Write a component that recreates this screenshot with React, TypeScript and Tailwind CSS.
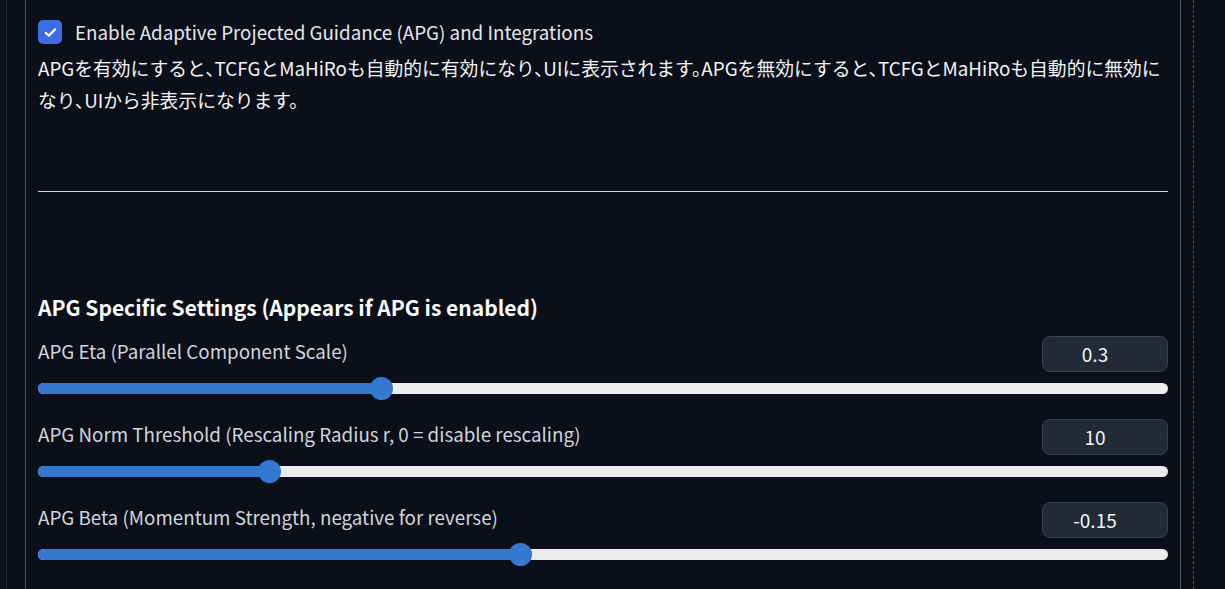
import React from "react";

const FONT = { fontFamily: '"Noto Sans CJK JP", "Noto Sans", sans-serif' };

function Slider({ label, value, pct }: { label: string; value: string; pct: number }) {
  return (
    <div className="flex flex-col">
      <div className="flex items-center justify-between h-[36px]">
        <span className="text-[18.8px] text-[#d1d5db] leading-[24px] -mt-[6px]">{label}</span>
        <div className="w-[126px] h-[36px] rounded-[8px] bg-[#222937] border border-[#374151] flex items-center justify-center pr-[20px] text-[19px] text-[#f3f4f6]">
          {value}
        </div>
      </div>
      <div className="relative mt-[11px] h-[11px] rounded-full bg-[#ececec]">
        <div className="absolute left-0 top-0 h-[11px] rounded-full bg-[#3478d0]" style={{ width: `${pct}%` }} />
        <div
          className="absolute top-[-6px] w-[23px] h-[23px] rounded-full bg-[#3478d0] -ml-[11.5px]"
          style={{ left: `${pct}%` }}
        />
      </div>
    </div>
  );
}

export default function App() {
  return (
    <div className="w-[1225px] h-[589px] overflow-hidden bg-[#0b0f19]" style={FONT}>
      <div className="ml-[6px] w-[1188px] h-full border-l border-l-[#1f2937] border-r border-r-[#4b5563] border-dashed" style={{ borderLeftStyle: "solid" }}>
        <div className="ml-[18px] w-[1156px] h-full border-l border-r border-[#4b5563] px-[12px] pt-[20px]">
          <div className="flex items-center h-[24px]">
            <div className="w-[24px] h-[24px] rounded-[5px] bg-[#3d6de4] flex items-center justify-center">
              <svg width="15" height="15" viewBox="0 0 16 16" fill="none">
                <path d="M3 8.5l3.2 3L13 4.5" stroke="white" strokeWidth="2.4" strokeLinecap="round" strokeLinejoin="round" />
              </svg>
            </div>
            <span className="ml-[13px] text-[18.8px] text-[#e5e7eb]">
              Enable Adaptive Projected Guidance (APG) and Integrations
            </span>
          </div>
          <p className="mt-[8px] text-[18.8px] leading-[32px] text-[#f3f4f6] [font-feature-settings:'halt']">
            APGを有効にすると、TCFGとMaHiRoも自動的に有効になり、UIに表示されます。APGを無効にすると、TCFGとMaHiRoも自動的に無効になり、UIから非表示になります。
          </p>
          <div className="mt-[75px] h-[1px] bg-[#d4d4d8]" />
          <h2 className="mt-[100px] text-[21px] leading-[30px] font-bold text-[#f9fafb]">
            APG Specific Settings (Appears if APG is enabled)
          </h2>
          <div className="mt-[14px] flex flex-col gap-[25px]">
            <Slider label="APG Eta (Parallel Component Scale)" value="0.3" pct={30.4} />
            <Slider label="APG Norm Threshold (Rescaling Radius r, 0 = disable rescaling)" value="10" pct={20.5} />
            <Slider label="APG Beta (Momentum Strength, negative for reverse)" value="-0.15" pct={42.7} />
          </div>
        </div>
      </div>
    </div>
  );
}
